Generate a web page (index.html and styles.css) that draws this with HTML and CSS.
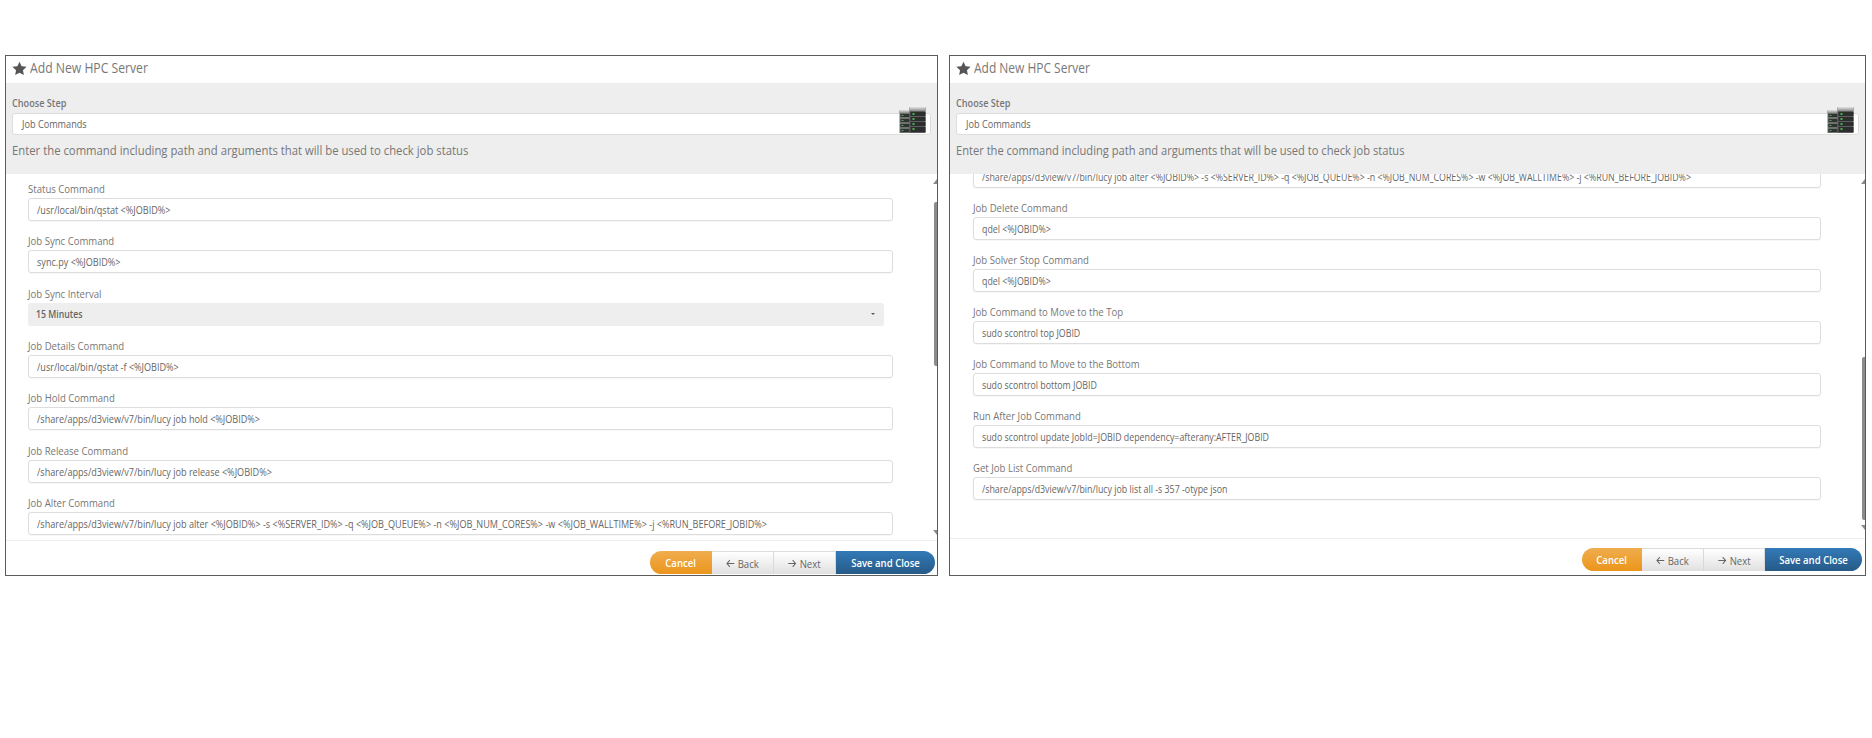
FILE: index.html
```html
<!DOCTYPE html>
<html lang="en">
<head>
<meta charset="utf-8">
<title>Add New HPC Server</title>
<link rel="stylesheet" href="styles.css">
</head>
<body>
<svg class="defs" width="0" height="0" aria-hidden="true">
  <defs>
    <linearGradient id="cap" x1="0" y1="0" x2="0" y2="1"><stop offset="0" stop-color="#e4e4e4"/><stop offset="1" stop-color="#8a8a8a"/></linearGradient>
    <symbol id="rack" viewBox="0 0 26 26">
      <rect x="0" y="3" width="11" height="23" fill="#6f7370"/>
      <rect x="0" y="3" width="11" height="3" fill="url(#cap)"/>
      <rect x="1" y="7" width="9" height="3" fill="#2e3230"/><rect x="2" y="8" width="2" height="1" fill="#4fa84f"/>
      <rect x="1" y="12" width="9" height="3" fill="#2e3230"/><rect x="2" y="13" width="2" height="1" fill="#4fa84f"/>
      <rect x="1" y="17" width="9" height="3" fill="#2e3230"/><rect x="2" y="18" width="2" height="1" fill="#4fa84f"/>
      <rect x="1" y="22" width="9" height="3" fill="#2e3230"/><rect x="2" y="23" width="2" height="1" fill="#4fa84f"/>
      <rect x="10" y="0" width="16" height="26" fill="#5b5f5c"/>
      <rect x="10" y="0" width="16" height="4" fill="url(#cap)"/>
      <rect x="11" y="5" width="15" height="4" fill="#2b2e2c"/><rect x="13" y="6" width="2" height="2" fill="#47b04a"/>
      <rect x="11" y="10" width="15" height="4" fill="#2b2e2c"/><rect x="13" y="11" width="2" height="2" fill="#47b04a"/>
      <rect x="11" y="15" width="15" height="4" fill="#2b2e2c"/><rect x="13" y="16" width="2" height="2" fill="#47b04a"/>
      <rect x="11" y="20" width="15" height="5" fill="#2b2e2c"/><rect x="13" y="21" width="2" height="2" fill="#47b04a"/>
    </symbol>
    <symbol id="star" viewBox="0 0 24 24">
      <path d="M12 1l3.4 7.2 7.9 1-5.8 5.4 1.5 7.8L12 18.6l-7 3.8 1.5-7.8L.7 9.2l7.9-1z"/>
    </symbol>
    <symbol id="arrow-left" viewBox="0 0 12 12">
      <path d="M11 6H2M5.5 2.2L1.8 6l3.7 3.8" fill="none" stroke="currentColor" stroke-width="1.2"/>
    </symbol>
    <symbol id="arrow-right" viewBox="0 0 12 12">
      <path d="M1 6h9M6.5 2.2L10.2 6l-3.7 3.8" fill="none" stroke="currentColor" stroke-width="1.2"/>
    </symbol>
  </defs>
</svg>
<main class="page">
  <section class="panel panel-a">
    <header class="head"><svg class="star"><use href="#star"/></svg><h1 class="title">Add New HPC Server</h1></header>
    <div class="band">
      <label class="step-label">Choose Step</label>
      <div class="step-select"><span class="txt">Job Commands</span><span class="caret"></span></div>
      <svg class="rack"><use href="#rack"/></svg>
      <p class="hint">Enter the command including path and arguments that will be used to check job status</p>
    </div>
    <div class="scroller">
      <div class="list">
        <div class="field"><label class="lbl">Status Command</label><div class="input"><span class="txt">/usr/local/bin/qstat &lt;%JOBID%&gt;</span></div></div>
        <div class="field"><label class="lbl">Job Sync Command</label><div class="input"><span class="txt">sync.py &lt;%JOBID%&gt;</span></div></div>
        <div class="field"><label class="lbl">Job Sync Interval</label><div class="select"><span class="txt">15 Minutes</span><span class="caret"></span></div></div>
        <div class="field"><label class="lbl">Job Details Command</label><div class="input"><span class="txt">/usr/local/bin/qstat -f &lt;%JOBID%&gt;</span></div></div>
        <div class="field"><label class="lbl">Job Hold Command</label><div class="input"><span class="txt">/share/apps/d3view/v7/bin/lucy job hold &lt;%JOBID%&gt;</span></div></div>
        <div class="field"><label class="lbl">Job Release Command</label><div class="input"><span class="txt">/share/apps/d3view/v7/bin/lucy job release &lt;%JOBID%&gt;</span></div></div>
        <div class="field"><label class="lbl">Job Alter Command</label><div class="input"><span class="txt">/share/apps/d3view/v7/bin/lucy job alter &lt;%JOBID%&gt; -s &lt;%SERVER_ID%&gt; -q &lt;%JOB_QUEUE%&gt; -n &lt;%JOB_NUM_CORES%&gt; -w &lt;%JOB_WALLTIME%&gt; -j &lt;%RUN_BEFORE_JOBID%&gt;</span></div></div>
      </div>
    </div>
    <div class="arrow-up"></div><div class="thumb"></div><div class="arrow-down"></div>
    <footer class="foot">
      <div class="btns">
        <button class="btn btn-cancel"><span class="btxt">Cancel</span></button>
        <button class="btn btn-back"><span class="btxt"><svg class="ico"><use href="#arrow-left"/></svg>Back</span></button>
        <button class="btn btn-next"><span class="btxt"><svg class="ico"><use href="#arrow-right"/></svg>Next</span></button>
        <button class="btn btn-save"><span class="btxt">Save and Close</span></button>
      </div>
    </footer>
  </section>
  <section class="panel panel-b">
    <header class="head"><svg class="star"><use href="#star"/></svg><h1 class="title">Add New HPC Server</h1></header>
    <div class="band">
      <label class="step-label">Choose Step</label>
      <div class="step-select"><span class="txt">Job Commands</span><span class="caret"></span></div>
      <svg class="rack"><use href="#rack"/></svg>
      <p class="hint">Enter the command including path and arguments that will be used to check job status</p>
    </div>
    <div class="scroller">
      <div class="list">
        <div class="field"><label class="lbl">Job Alter Command</label><div class="input"><span class="txt">/share/apps/d3view/v7/bin/lucy job alter &lt;%JOBID%&gt; -s &lt;%SERVER_ID%&gt; -q &lt;%JOB_QUEUE%&gt; -n &lt;%JOB_NUM_CORES%&gt; -w &lt;%JOB_WALLTIME%&gt; -j &lt;%RUN_BEFORE_JOBID%&gt;</span></div></div>
        <div class="field"><label class="lbl">Job Delete Command</label><div class="input"><span class="txt">qdel &lt;%JOBID%&gt;</span></div></div>
        <div class="field"><label class="lbl">Job Solver Stop Command</label><div class="input"><span class="txt">qdel &lt;%JOBID%&gt;</span></div></div>
        <div class="field"><label class="lbl">Job Command to Move to the Top</label><div class="input"><span class="txt">sudo scontrol top JOBID</span></div></div>
        <div class="field"><label class="lbl">Job Command to Move to the Bottom</label><div class="input"><span class="txt">sudo scontrol bottom JOBID</span></div></div>
        <div class="field"><label class="lbl">Run After Job Command</label><div class="input"><span class="txt">sudo scontrol update JobId=JOBID dependency=afterany:AFTER_JOBID</span></div></div>
        <div class="field"><label class="lbl">Get Job List Command</label><div class="input"><span class="txt">/share/apps/d3view/v7/bin/lucy job list all -s 357 -otype json</span></div></div>
      </div>
    </div>
    <div class="arrow-up"></div><div class="thumb"></div><div class="arrow-down"></div>
    <footer class="foot">
      <div class="btns">
        <button class="btn btn-cancel"><span class="btxt">Cancel</span></button>
        <button class="btn btn-back"><span class="btxt"><svg class="ico"><use href="#arrow-left"/></svg>Back</span></button>
        <button class="btn btn-next"><span class="btxt"><svg class="ico"><use href="#arrow-right"/></svg>Next</span></button>
        <button class="btn btn-save"><span class="btxt">Save and Close</span></button>
      </div>
    </footer>
  </section>
</main>
</body>
</html>
```
FILE: styles.css
```css
* { box-sizing: border-box; }
html, body { margin: 0; padding: 0; background: #fff; }
body { font-family: "Open Sans", "Liberation Sans", sans-serif; color: #777; height: 738px; overflow: hidden; }
.defs { position: absolute; }
.page { display: flex; gap: 11px; padding: 55px 0 0 5px; align-items: flex-start; }
.panel { position: relative; display: flex; flex-direction: column; height: 521px; border: 1px solid #5c5c5c; background: #fff; }
.panel-a { width: 933px; }
.panel-b { width: 917px; }
.title, .step-label, .hint, .lbl, .txt { transform: scaleX(.87); transform-origin: 0 50%; }
.txt { display: inline-block; white-space: nowrap; }
.input .txt { transform: scaleX(.865); }
.panel-b .hint, .panel-b .title { transform: scaleX(.855); }
.panel-b .input .txt { transform: scaleX(.84); }
.head { display: flex; align-items: center; gap: 3px; height: 27px; padding: 0 6px 3px; }
.star { width: 15px; height: 15px; fill: #555; flex: none; }
.title { margin: 0; font-size: 14px; font-weight: 400; color: #777; line-height: 20px; }
.band { position: relative; height: 91px; background: #eee; padding: 12px 6px 0; }
.step-label { display: block; font-size: 10.5px; font-weight: 600; line-height: 16px; height: 18px; color: #777; }
.step-select { position: relative; height: 22px; background: #fff; border: 1px solid #ddd; border-radius: 3px; font-size: 10.5px; line-height: 21px; padding-left: 9px; color: #666; }
.step-select .caret { right: 4px; }
.rack { position: absolute; top: 24px; right: 11px; width: 27px; height: 26px; }
.hint { margin: 6px 0 0; font-size: 13px; line-height: 18px; color: #777; }
.caret { position: absolute; right: 9px; top: 50%; margin-top: -1px; border-left: 2px solid transparent; border-right: 2px solid transparent; border-top: 2px solid #555; }
.scroller { flex: 1 1 0; min-height: 0; overflow: hidden; padding: 6px 44px 0 22px; }
.panel-b .scroller { padding-left: 23px; }
.panel-b .list { margin-top: -33px; }
.field { height: 41px; margin-bottom: 11.33px; }
.panel-b .field { margin-bottom: 11.05px; }
.lbl { display: block; height: 18px; font-size: 11px; line-height: 18px; color: #777; }
.input { height: 23px; border: 1px solid #ddd; border-radius: 3px; background: #fff; font-size: 10.5px; line-height: 22px; padding-left: 8px; color: #666; box-shadow: 0 1px 1px rgba(0,0,0,.03); }
.select { position: relative; height: 23px; margin-right: 9px; border-radius: 3px; background: #eee; font-size: 10px; font-weight: 600; line-height: 23px; padding-left: 8px; color: #666; }
.thumb, .arrow-up, .arrow-down { position: absolute; right: 0; }
.thumb { width: 3px; background: #8b8b8b; border-radius: 2px 0 0 2px; }
.panel-a .thumb { top: 146px; height: 164px; }
.panel-b .thumb { top: 301px; height: 163px; }
.arrow-up { top: 123px; border-left: 4px solid transparent; border-bottom: 5px solid #8b8b8b; }
.arrow-down { border-left: 4px solid transparent; border-top: 5px solid #8b8b8b; }
.panel-a .arrow-down { top: 474px; }
.panel-b .arrow-down { top: 469px; }
.foot { border-top: 1px solid #eee; display: flex; justify-content: flex-end; padding-right: 2px; }
.panel-a .foot { height: 35px; padding-top: 10px; }
.panel-b .foot { height: 37px; padding-top: 9px; padding-right: 3px; }
.btns { display: flex; height: 23px; }
.btn { display: flex; align-items: center; justify-content: center; height: 23px; border: 0; margin: 0; padding: 0; font-family: inherit; font-size: 11px; }
.btxt { display: inline-flex; align-items: center; gap: 3px; white-space: nowrap; transform: scaleX(.87); }
.btn-cancel { width: 62px; border-radius: 12px 0 0 12px; background: linear-gradient(#f0ad4e, #eb951b); color: #fff; font-weight: 600; }
.btn-back, .btn-next { width: 62px; background: linear-gradient(#fff, #e0e0e0); color: #666; border-right: 1px solid #d9d9d9; border-top: 1px solid #ddd; }
.btn-save { width: 99px; border-radius: 0 12px 12px 0; background: linear-gradient(#337ab7, #265a88); color: #fff; font-weight: 600; }
.panel-b .btn-cancel { width: 60px; }
.panel-b .btn-next { width: 61px; }
.panel-b .btn-save { width: 97px; }
.ico { width: 11px; height: 11px; flex: none; }
```
